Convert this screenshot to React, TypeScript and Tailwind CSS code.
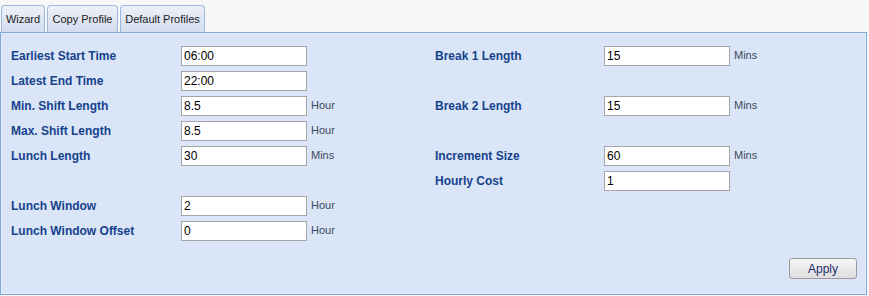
import React from "react";

type Field = { label: string; value: string; unit?: string } | null;

const left: Field[] = [
  { label: "Earliest Start Time", value: "06:00" },
  { label: "Latest End Time", value: "22:00" },
  { label: "Min. Shift Length", value: "8.5", unit: "Hour" },
  { label: "Max. Shift Length", value: "8.5", unit: "Hour" },
  { label: "Lunch Length", value: "30", unit: "Mins" },
  null,
  { label: "Lunch Window", value: "2", unit: "Hour" },
  { label: "Lunch Window Offset", value: "0", unit: "Hour" },
];

const right: Field[] = [
  { label: "Break 1 Length", value: "15", unit: "Mins" },
  null,
  { label: "Break 2 Length", value: "15", unit: "Mins" },
  null,
  { label: "Increment Size", value: "60", unit: "Mins" },
  { label: "Hourly Cost", value: "1" },
];

function Row({ field, labelW }: { field: Field; labelW: string }) {
  if (!field) return <div className="h-[25px]" />;
  return (
    <div className="flex h-[25px] items-center">
      <span className={`${labelW} shrink-0 text-[12px] font-bold text-[#15428b]`}>{field.label}</span>
      <input
        readOnly
        value={field.value}
        className="h-[20px] w-[126px] border border-[#a5a5a5] bg-white px-[2px] text-[12px] text-black outline-none"
      />
      {field.unit && <span className="ml-[4px] text-[11px] text-[#3c4a5e]">{field.unit}</span>}
    </div>
  );
}

function Tab({ children, className }: { children: React.ReactNode; className: string }) {
  return (
    <div
      className={`flex h-[27px] items-center justify-center rounded-t-[4px] border border-b-0 border-[#9ab8e0] bg-gradient-to-b from-[#edf1f8] to-[#d3dcee] text-[11px] text-[#1a1a1a] ${className}`}
    >
      {children}
    </div>
  );
}

export default function App() {
  return (
    <div className="h-[296px] w-[869px] bg-[#f7f7f7] font-['Liberation_Sans',Arial,sans-serif]">
      <div className="flex gap-[2px] pl-[1px] pt-[5px]">
        <Tab className="w-[44px]">Wizard</Tab>
        <Tab className="w-[71px]">Copy Profile</Tab>
        <Tab className="w-[85px]">Default Profiles</Tab>
      </div>
      <div className="h-[263px] w-[867px] border border-[#7fa8db] bg-[#dbe5f8]">
        <div className="flex h-full flex-col border border-[#e6edfa] pl-[9px] pt-[9px]">
          <div className="flex">
            <div className="w-[424px]">
              {left.map((f, i) => (
                <Row key={i} field={f} labelW="w-[170px]" />
              ))}
            </div>
            <div>
              {right.map((f, i) => (
                <Row key={i} field={f} labelW="w-[169px]" />
              ))}
            </div>
          </div>
          <div className="mt-auto flex justify-end pb-[14px] pr-[8px]">
            <button className="h-[21px] w-[68px] rounded-[3px] border border-[#9a9a9a] bg-gradient-to-b from-[#f6f6f6] to-[#dedede] text-[12px] text-[#1f2a6b]">
              Apply
            </button>
          </div>
        </div>
      </div>
    </div>
  );
}
